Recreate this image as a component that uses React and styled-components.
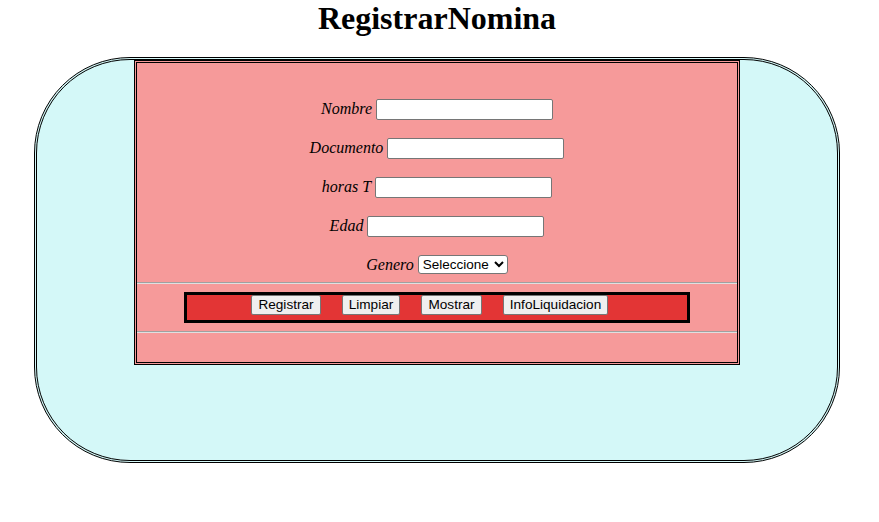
import React from "react";
import styled, { createGlobalStyle } from "styled-components";

const GlobalStyle = createGlobalStyle`
  html, body {
    margin: 0;
    padding: 0;
    background: #ffffff;
  }
  body {
    font-family: "Liberation Serif", "Times New Roman", serif;
    color: #000;
  }
`;

const Page = styled.div`
  width: 874px;
`;

const Title = styled.h1`
  margin: 0 0 20px;
  font-family: "Liberation Serif", "Times New Roman", serif;
  font-size: 32px;
  font-weight: bold;
  line-height: 37px;
  text-align: center;
`;

const Frame = styled.div`
  box-sizing: border-box;
  width: 806px;
  height: 406px;
  margin-left: 34px;
  border: 3px double #000;
  border-radius: 96px;
  background: #d4f8f8;
`;

const Panel = styled.form`
  box-sizing: border-box;
  width: 606px;
  height: 305px;
  margin: 0 auto;
  border: 3px double #000;
  background: #f69a9a;
  padding-top: 35px;
  display: flex;
  flex-direction: column;
`;

const Fields = styled.div`
  display: flex;
  flex-direction: column;
  gap: 17px;
`;

const Row = styled.div`
  height: 22px;
  display: flex;
  align-items: center;
  justify-content: center;
  gap: 4px;
`;

const Label = styled.label`
  font-family: "Liberation Serif", "Times New Roman", serif;
  font-style: italic;
  font-size: 16px;
`;

const TextInput = styled.input`
  box-sizing: border-box;
  width: 177px;
  height: 21px;
  margin: 0;
  padding: 1px 2px;
  border: 1px solid #767676;
  border-radius: 2px;
  background: #fff;
  font-family: "Liberation Sans", Arial, sans-serif;
  font-size: 13.33px;
`;

const Select = styled.select`
  box-sizing: border-box;
  width: 90px;
  height: 19px;
  margin: -2px 0 0;
  border: 1px solid #767676;
  border-radius: 3px;
  background: #fff;
  color: #000;
  font-family: "Liberation Sans", Arial, sans-serif;
  font-size: 13.5px;
`;

const Rule = styled.hr`
  margin: ${(p) => p.$top}px 0 0;
  height: 0;
  border: none;
  border-top: 1px solid #a0a0a0;
  border-bottom: 1px solid #e0e0e0;
`;

const ButtonBar = styled.div`
  box-sizing: border-box;
  width: 506px;
  height: 31px;
  margin: 8px auto 0;
  border: 3px solid #000;
  background: #e33535;
  padding-left: 64px;
  display: flex;
  align-items: flex-start;
  gap: 21px;
`;

const Button = styled.button`
  box-sizing: border-box;
  width: ${(p) => p.$w}px;
  height: 20px;
  margin: 0;
  padding: 1px 0;
  border: 1px solid #767676;
  border-radius: 2px;
  background: #efefef;
  color: #000;
  font-family: "Liberation Sans", Arial, sans-serif;
  font-size: 13.6px;
  line-height: 16px;
  text-align: center;
`;

const fields = [
  { id: "nombre", label: "Nombre" },
  { id: "documento", label: "Documento" },
  { id: "horas", label: "horas T" },
  { id: "edad", label: "Edad" },
];

const buttons = [
  { label: "Registrar", w: 70 },
  { label: "Limpiar", w: 58 },
  { label: "Mostrar", w: 61 },
  { label: "InfoLiquidacion", w: 105 },
];

export default function App() {
  return (
    <Page>
      <GlobalStyle />
      <Title>RegistrarNomina</Title>
      <Frame>
        <Panel onSubmit={(e) => e.preventDefault()}>
          <Fields>
            {fields.map((f) => (
              <Row key={f.id}>
                <Label htmlFor={f.id}>{f.label}</Label>
                <TextInput id={f.id} type="text" />
              </Row>
            ))}
            <Row>
              <Label htmlFor="genero">Genero</Label>
              <Select id="genero" defaultValue="">
                <option value="">Seleccione</option>
                <option value="M">Masculino</option>
                <option value="F">Femenino</option>
              </Select>
            </Row>
          </Fields>
          <Rule $top={6} />
          <ButtonBar>
            {buttons.map((b) => (
              <Button key={b.label} type="button" $w={b.w}>
                {b.label}
              </Button>
            ))}
          </ButtonBar>
          <Rule $top={8} />
        </Panel>
      </Frame>
    </Page>
  );
}
